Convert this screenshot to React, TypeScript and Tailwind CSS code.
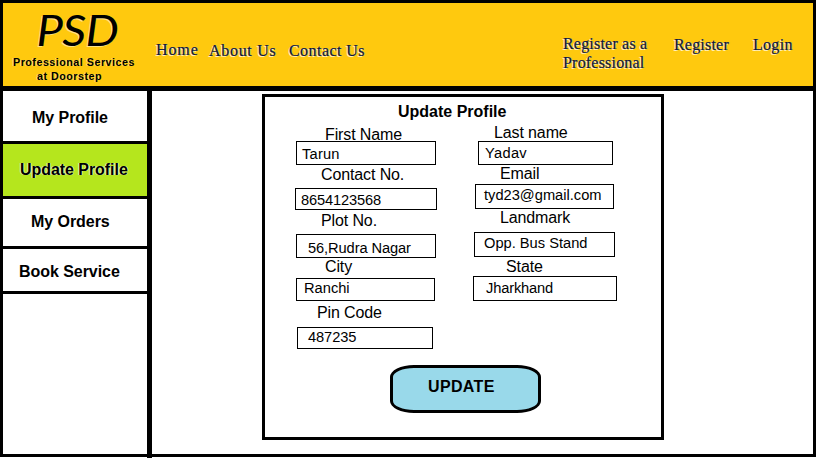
import React from "react";

type FieldProps = {
  label: string;
  value: string;
  labelClass: string;
  boxClass: string;
};

function Field({ label, value, labelClass, boxClass }: FieldProps) {
  return (
    <div className="flex flex-col">
      <div className={`whitespace-nowrap text-[16px] tracking-[-0.12px] ${labelClass}`}>{label}</div>
      <div className={`whitespace-nowrap border border-black text-[14.67px] ${boxClass}`}>{value}</div>
    </div>
  );
}

const leftFields: FieldProps[] = [
  { label: "First Name", value: "Tarun", labelClass: "h-[15px] pl-[30px] leading-[17px]", boxClass: "ml-px h-6 w-[140px] pl-[5px] leading-[24px] tracking-[0.2px]" },
  { label: "Contact No.", value: "8654123568", labelClass: "h-[23px] pl-[26px] leading-[19px]", boxClass: "h-[22px] w-[142px] pl-[5px] leading-[22px] tracking-[-0.15px]" },
  { label: "Plot No.", value: "56,Rudra Nagar", labelClass: "h-6 pl-[26px] leading-[21px]", boxClass: "ml-px h-6 w-[140px] pl-[11px] leading-[26px] tracking-[-0.1px]" },
  { label: "City", value: "Ranchi", labelClass: "h-5 pl-[30px] leading-[17px]", boxClass: "ml-px h-[23px] w-[139px] pl-[7px] leading-[18px]" },
  { label: "Pin Code", value: "487235", labelClass: "h-[26px] pl-[22px] leading-[23px]", boxClass: "ml-0.5 h-[22px] w-[136px] pl-[10px] leading-[18px] tracking-[-0.1px]" },
];

const rightFields: FieldProps[] = [
  { label: "Last name", value: "Yadav", labelClass: "h-[15px] pl-[21px] leading-[13px]", boxClass: "ml-[5px] h-6 w-[135px] pl-[6px] leading-[22px] tracking-[0.3px]" },
  { label: "Email", value: "tyd23@gmail.com", labelClass: "h-[19px] pl-[27px] leading-[17px]", boxClass: "ml-0.5 h-[25px] w-[139px] pl-[8px] leading-[20px]" },
  { label: "Landmark", value: "Opp. Bus Stand", labelClass: "h-[23px] pl-[27px] leading-[17px]", boxClass: "ml-px h-[25px] w-[141px] pl-[9px] leading-[20px]" },
  { label: "State", value: "Jharkhand", labelClass: "h-[19px] pl-[33px] leading-[19px]", boxClass: "h-[25px] w-[144px] pl-[12px] leading-[22px] tracking-[-0.15px]" },
];

const menu = [
  { label: "My Profile", className: "h-[53px] pl-[29px] leading-[53px]" },
  { label: "Update Profile", className: "h-[55px] bg-[#b5e61d] pl-[17px] leading-[51px] [text-shadow:-1px_0_0_rgba(255,255,255,0.6),1px_0_0_rgba(255,255,255,0.6)]" },
  { label: "My Orders", className: "h-[50px] pl-[28px] leading-[45px]" },
  { label: "Book Service", className: "h-[45px] pl-[16px] leading-[45px]" },
];

function Header() {
  return (
    <header className="flex h-[88px] items-start border-b-[5px] border-black bg-[#ffc90e] text-black">
      <div className="w-[150px] pt-[9px]">
        <div className="h-[43px] origin-left scale-x-[1.12] whitespace-nowrap pl-[30px] font-['Lato',sans-serif] text-[42px] italic leading-[37px] tracking-[-0.6px] [text-shadow:-1px_1px_0_rgba(255,255,255,0.5)]">
          PSD
        </div>
        <div className="whitespace-nowrap pl-[10px] text-[10.67px] font-bold leading-[14px] tracking-[0.53px] [text-shadow:-1px_0_0_rgba(255,255,255,0.45)]">
          <div>Professional Services</div>
          <div className="pl-6">at Doorstep</div>
        </div>
      </div>
      <nav className="flex flex-1 items-start whitespace-nowrap font-['Liberation_Serif',serif] text-[16px] leading-[19px] text-[#10163a] [-webkit-text-stroke:0.2px_#10163a] [text-shadow:-1px_1px_0_rgba(255,255,255,0.75),1px_0_0_rgba(200,220,255,0.4)]">
        <a className="ml-[3px] mt-[37px] w-[53px] tracking-[0.9px]">Home</a>
        <a className="mt-[38px] w-[80px] tracking-[0.7px]">About Us</a>
        <a className="mt-[38px] w-[274px] tracking-[0.45px]">Contact Us</a>
        <a className="mt-[31px] w-[111px] tracking-[0.2px]">
          Register as a
          <br />
          Professional
        </a>
        <a className="mt-[32px] w-[79px] tracking-[0.2px]">Register</a>
        <a className="mt-[32px] tracking-[0.3px]">Login</a>
      </nav>
    </header>
  );
}

export default function App() {
  return (
    <div className="h-[458px] w-[816px] overflow-hidden bg-white font-['Liberation_Sans',Arial,sans-serif] text-black">
      <div className="h-[457px] border-[3px] border-black">
        <Header />
        <div className="flex h-[363px]">
          <aside className="h-[367px] w-[149px] shrink-0 border-r-[5px] border-black">
            {menu.map((item) => (
              <div key={item.label} className={`whitespace-nowrap border-b-[3px] border-black text-[16px] font-bold tracking-[-0.05px] ${item.className}`}>
                {item.label}
              </div>
            ))}
          </aside>
          <main className="ml-[110px] mt-[3px] h-[346px] w-[402px] border-[3px] border-black">
            <h1 className="h-[29px] pl-[133px] text-[16px] font-bold leading-[29px]">Update Profile</h1>
            <div className="flex h-[239px] pl-[30px]">
              <div className="w-[178px]">
                {leftFields.map((f) => (
                  <Field key={f.label} {...f} />
                ))}
              </div>
              <div>
                {rightFields.map((f) => (
                  <Field key={f.label} {...f} />
                ))}
              </div>
            </div>
            <button className="ml-[125px] block h-[48px] w-[151px] rounded-[24px/12px] border-[3px] border-black bg-[#99d9ea] pl-[35px] text-left text-[16px] font-bold leading-[37px] tracking-[0.35px]">
              <span className="block h-[42px]">UPDATE</span>
            </button>
          </main>
        </div>
      </div>
    </div>
  );
}
